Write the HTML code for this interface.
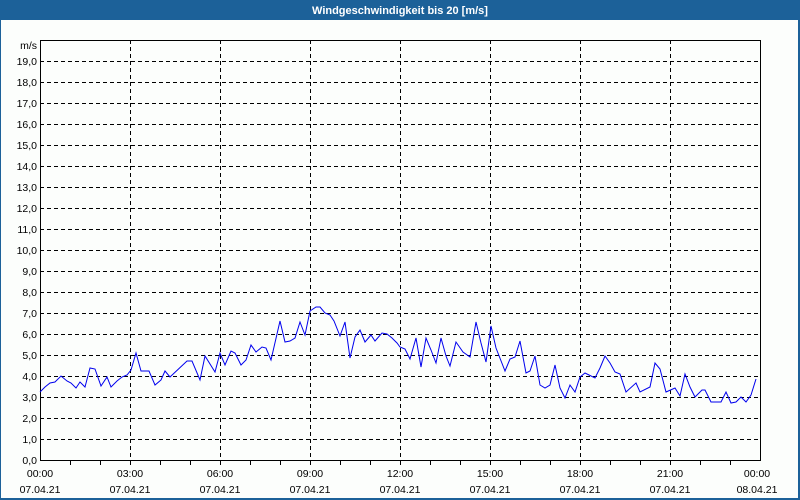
<!DOCTYPE html>
<html><head><meta charset="utf-8"><style>
html,body{margin:0;padding:0;width:800px;height:500px;overflow:hidden;background:#fff}
</style></head><body>
<svg width="800" height="500" xmlns="http://www.w3.org/2000/svg" font-family="Liberation Sans, sans-serif" font-size="10.5">
<rect x="0" y="0" width="800" height="500" fill="#1c6199"/>
<rect x="1" y="20" width="797" height="478" fill="#fcfefc"/>
<text x="400" y="14" fill="#fff" font-weight="bold" text-anchor="middle" font-size="11">Windgeschwindigkeit bis 20 [m/s]</text>
<g stroke="#000" stroke-width="1" stroke-dasharray="4,3" fill="none">
<path d="M40 61.5H760M40 82.5H760M40 103.5H760M40 124.5H760M40 145.5H760M40 166.5H760M40 187.5H760M40 208.5H760M40 229.5H760M40 250.5H760M40 271.5H760M40 292.5H760M40 313.5H760M40 334.5H760M40 355.5H760M40 376.5H760M40 397.5H760M40 418.5H760M40 439.5H760"/>
<path d="M130.5 40V460M220.5 40V460M310.5 40V460M400.5 40V460M490.5 40V460M580.5 40V460M670.5 40V460"/>
</g>
<rect x="40.5" y="40.5" width="720" height="420" fill="none" stroke="#000"/>
<path d="M70.5 460V465M100.5 460V465M130.5 460V465M160.5 460V465M190.5 460V465M220.5 460V465M250.5 460V465M280.5 460V465M310.5 460V465M340.5 460V465M370.5 460V465M400.5 460V465M430.5 460V465M460.5 460V465M490.5 460V465M520.5 460V465M550.5 460V465M580.5 460V465M610.5 460V465M640.5 460V465M670.5 460V465M700.5 460V465M730.5 460V465" stroke="#000"/>
<g text-anchor="end" fill="#000">
<text x="37" y="49">m/s</text>
<text x="37" y="65">19,0</text><text x="37" y="86">18,0</text><text x="37" y="107">17,0</text><text x="37" y="128">16,0</text><text x="37" y="149">15,0</text><text x="37" y="170">14,0</text><text x="37" y="191">13,0</text><text x="37" y="212">12,0</text><text x="37" y="233">11,0</text><text x="37" y="254">10,0</text><text x="37" y="275">9,0</text><text x="37" y="296">8,0</text><text x="37" y="317">7,0</text><text x="37" y="338">6,0</text><text x="37" y="359">5,0</text><text x="37" y="380">4,0</text><text x="37" y="401">3,0</text><text x="37" y="422">2,0</text><text x="37" y="443">1,0</text><text x="37" y="464">0,0</text>
</g>
<g text-anchor="middle" fill="#000">
<text x="40" y="477">00:00</text><text x="40" y="493">07.04.21</text>
<text x="130" y="477">03:00</text><text x="130" y="493">07.04.21</text>
<text x="220" y="477">06:00</text><text x="220" y="493">07.04.21</text>
<text x="310" y="477">09:00</text><text x="310" y="493">07.04.21</text>
<text x="400" y="477">12:00</text><text x="400" y="493">07.04.21</text>
<text x="490" y="477">15:00</text><text x="490" y="493">07.04.21</text>
<text x="580" y="477">18:00</text><text x="580" y="493">07.04.21</text>
<text x="670" y="477">21:00</text><text x="670" y="493">07.04.21</text>
<text x="757" y="477">00:00</text><text x="757" y="493">08.04.21</text>
</g>
<polyline fill="none" stroke="#0000ee" stroke-width="1" points="40,392 45,387 50,383 55,382 61,376 67,381 71,383 76,388 80,382 85,387 90,368 95,369 101,386 107,377 111,387 117,381 122,377 127,375 131,370 136,353 141,371 149,371 155,385 161,380 165,371 170,377 187,361 192,361 200,380 205,356 215,372 220,353 225,365 231,351 235,353 241,365 246,360 251,345 256,352 262,347 266,348 271,360 280,321 285,342 290,341 295,338 300,322 305,335 310,311 316,307 320,307 325,313 330,315 334,321 340,336 345,322 350,358 355,337 360,330 365,342 371,335 375,341 382,333 387,334 392,338 397,343 400,347 405,349 410,359 416,338 421,367 426,338 431,350 436,363 441,338 446,356 450,366 456,342 463,352 470,357 476,322 481,343 486,362 491,326 496,348 505,371 510,359 515,357 520,341 526,373 530,371 535,356 540,385 545,388 550,385 555,365 560,388 565,398 570,385 575,392 580,377 585,373 595,378 600,368 605,356 610,363 615,372 620,374 626,392 636,383 640,392 650,387 655,363 660,369 666,392 675,388 680,396 685,374 690,387 695,397 702,390 705,390 711,402 721,402 726,392 731,403 736,402 741,397 746,402 751,395 756,379"/>
</svg>
</body></html>
